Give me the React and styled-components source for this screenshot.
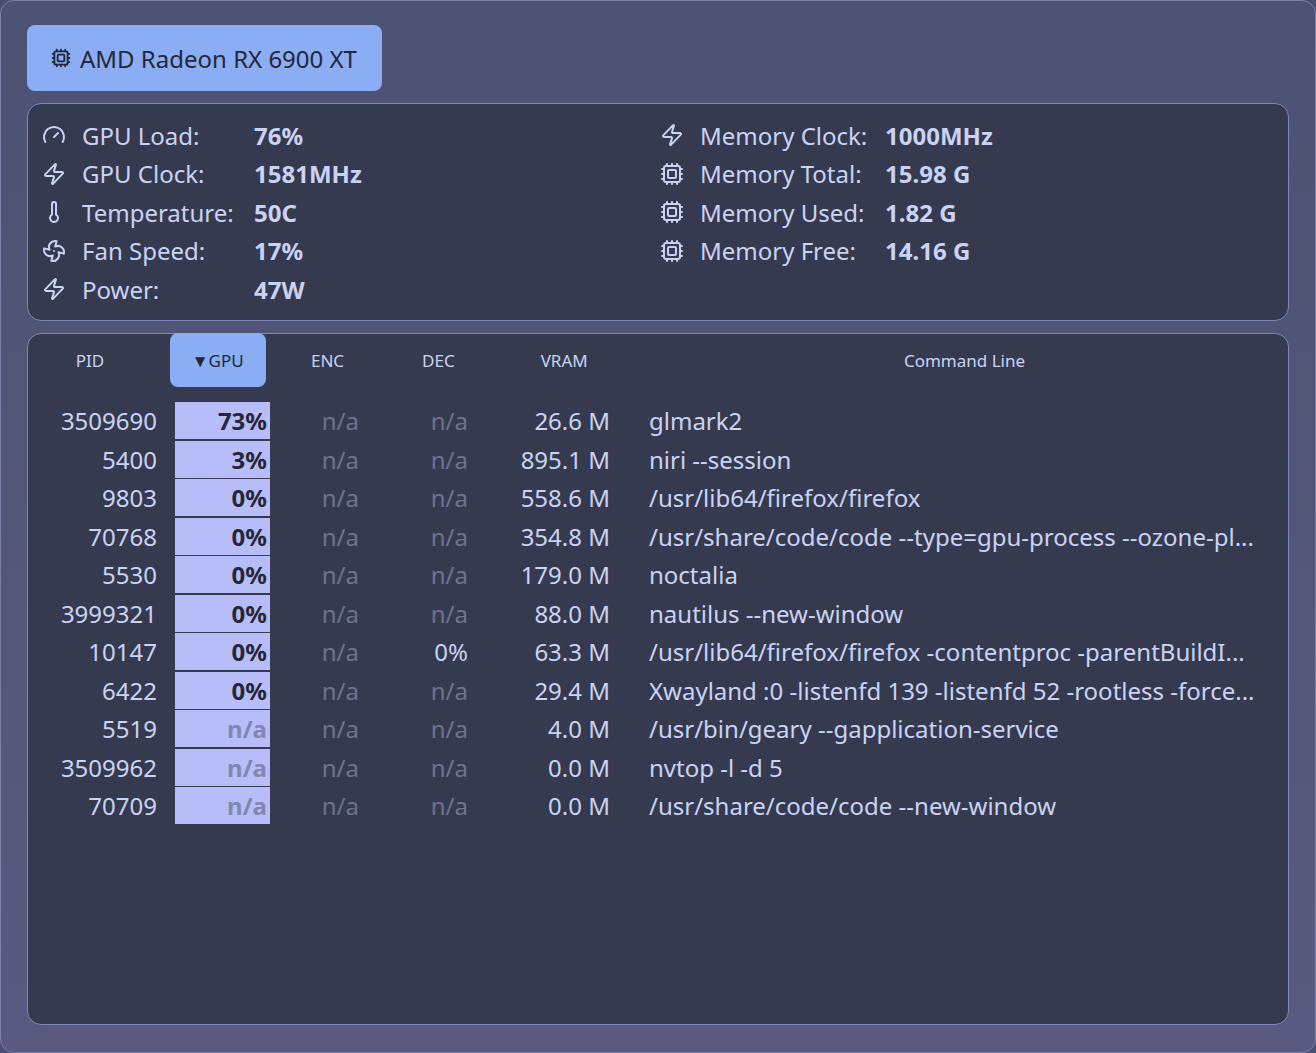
import React from "react";
import styled, { createGlobalStyle } from "styled-components";
import { Gauge, Zap, Thermometer, Fan, Cpu } from "lucide-react";

const Global = createGlobalStyle`
  html, body { margin: 0; padding: 0; background: #4a4f6f; }
  body { font-family: "Noto Sans", "Open Sans", sans-serif; }
`;

const Window = styled.div`
  box-sizing: border-box;
  width: 1316px;
  height: 1053px;
  background: linear-gradient(180deg, #4c5273 0%, #545779 60%, #5a5a80 100%);
  border: 1px solid #7a80a8;
  border-radius: 14px;
  padding: 24px 26px 27px 26px;
  display: flex;
  flex-direction: column;
  gap: 12px;
`;

const DeviceTab = styled.div`
  align-self: flex-start;
  box-sizing: border-box;
  height: 66px;
  width: 355px;
  background: #8aadf4;
  border-radius: 8px;
  display: flex;
  align-items: center;
  gap: 9px;
  padding-left: 24px;
  color: #24273a;
  font-size: 24px;
`;

const Panel = styled.div`
  box-sizing: border-box;
  background: #363a4f;
  border: 1.5px solid #7f88b8;
  border-radius: 14px;
`;

const StatsPanel = styled(Panel)`
  height: 218px;
  padding: 12px 0 0 14px;
  display: grid;
  grid-template-columns: 618px 1fr;
`;

const StatCol = styled.div`
  display: flex;
  flex-direction: column;
`;

const StatRow = styled.div`
  height: 38.5px;
  display: grid;
  grid-template-columns: 40px ${(p) => p.$label}px auto;
  align-items: center;
  color: #cad3f5;
  font-size: 24px;
`;

const Value = styled.span`
  font-weight: 700;
`;

const TablePanel = styled(Panel)`
  flex: 1;
  display: flex;
  flex-direction: column;
`;

const Header = styled.div`
  display: flex;
  height: 54px;
  margin-top: -1px;
  margin-bottom: 15px;
`;

const HeadCell = styled.div`
  width: ${(p) => p.$w}px;
  margin-left: ${(p) => p.$ml || 0}px;
  display: flex;
  align-items: center;
  justify-content: center;
  font-size: 17px;
  color: ${(p) => (p.$active ? "#24273a" : "#cad3f5")};
  background: ${(p) => (p.$active ? "#8aadf4" : "transparent")};
  border-radius: 8px;
`;

const Rows = styled.div`
  display: flex;
  flex-direction: column;
  gap: 1.5px;
`;

const Row = styled.div`
  display: grid;
  grid-template-columns: 129px 95px 107px 109px 142px 1fr;
  column-gap: 0;
  height: 37px;
  align-items: center;
  font-size: 24px;
  color: #cad3f5;
`;

const Num = styled.div`
  text-align: right;
  color: ${(p) => (p.$dim ? "#6e738d" : "#cad3f5")};
`;

const GpuCell = styled.div`
  margin-left: 18px;
  width: 95px;
  box-sizing: border-box;
  height: 37px;
  background: #b7bdf8;
  display: flex;
  align-items: center;
  justify-content: flex-end;
  padding-right: 3px;
  font-weight: 700;
  color: ${(p) => (p.$dim ? "#8087b0" : "#24273a")};
`;

const Cmd = styled.div`
  padding-left: 39px;
  white-space: nowrap;
`;

const left = [
  [Gauge, "GPU Load:", "76%"],
  [Zap, "GPU Clock:", "1581MHz"],
  [Thermometer, "Temperature:", "50C"],
  [Fan, "Fan Speed:", "17%"],
  [Zap, "Power:", "47W"],
];
const right = [
  [Zap, "Memory Clock:", "1000MHz"],
  [Cpu, "Memory Total:", "15.98 G"],
  [Cpu, "Memory Used:", "1.82 G"],
  [Cpu, "Memory Free:", "14.16 G"],
];

const rows = [
  ["3509690", "73%", "n/a", "n/a", "26.6 M", "glmark2"],
  ["5400", "3%", "n/a", "n/a", "895.1 M", "niri --session"],
  ["9803", "0%", "n/a", "n/a", "558.6 M", "/usr/lib64/firefox/firefox"],
  ["70768", "0%", "n/a", "n/a", "354.8 M", "/usr/share/code/code --type=gpu-process --ozone-pl..."],
  ["5530", "0%", "n/a", "n/a", "179.0 M", "noctalia"],
  ["3999321", "0%", "n/a", "n/a", "88.0 M", "nautilus --new-window"],
  ["10147", "0%", "n/a", "0%", "63.3 M", "/usr/lib64/firefox/firefox -contentproc -parentBuildI..."],
  ["6422", "0%", "n/a", "n/a", "29.4 M", "Xwayland :0 -listenfd 139 -listenfd 52 -rootless -force..."],
  ["5519", "n/a", "n/a", "n/a", "4.0 M", "/usr/bin/geary --gapplication-service"],
  ["3509962", "n/a", "n/a", "n/a", "0.0 M", "nvtop -l -d 5"],
  ["70709", "n/a", "n/a", "n/a", "0.0 M", "/usr/share/code/code --new-window"],
];

const Stat = ({ item, label }) => {
  const [Icon, l, v] = item;
  return (
    <StatRow $label={label}>
      <Icon size={24} strokeWidth={2} />
      <span>{l}</span>
      <Value>{v}</Value>
    </StatRow>
  );
};

export default function App() {
  return (
    <>
      <Global />
      <Window>
        <DeviceTab>
          <Cpu size={20} strokeWidth={2.2} />
          AMD Radeon RX 6900 XT
        </DeviceTab>
        <StatsPanel>
          <StatCol>
            {left.map((it) => <Stat key={it[1]} item={it} label={172} />)}
          </StatCol>
          <StatCol>
            {right.map((it) => <Stat key={it[1]} item={it} label={185} />)}
          </StatCol>
        </StatsPanel>
        <TablePanel>
          <Header>
            <HeadCell $w={124}>PID</HeadCell>
            <HeadCell $w={96} $ml={18} $active>▼GPU</HeadCell>
            <HeadCell $w={124}>ENC</HeadCell>
            <HeadCell $w={98}>DEC</HeadCell>
            <HeadCell $w={154}>VRAM</HeadCell>
            <HeadCell $w={648}>Command Line</HeadCell>
          </Header>
          <Rows>
            {rows.map((r) => (
              <Row key={r[0]}>
                <Num>{r[0]}</Num>
                <GpuCell $dim={r[1] === "n/a"}>{r[1]}</GpuCell>
                <Num $dim={r[2] === "n/a"}>{r[2]}</Num>
                <Num $dim={r[3] === "n/a"}>{r[3]}</Num>
                <Num>{r[4]}</Num>
                <Cmd>{r[5]}</Cmd>
              </Row>
            ))}
          </Rows>
        </TablePanel>
      </Window>
    </>
  );
}
